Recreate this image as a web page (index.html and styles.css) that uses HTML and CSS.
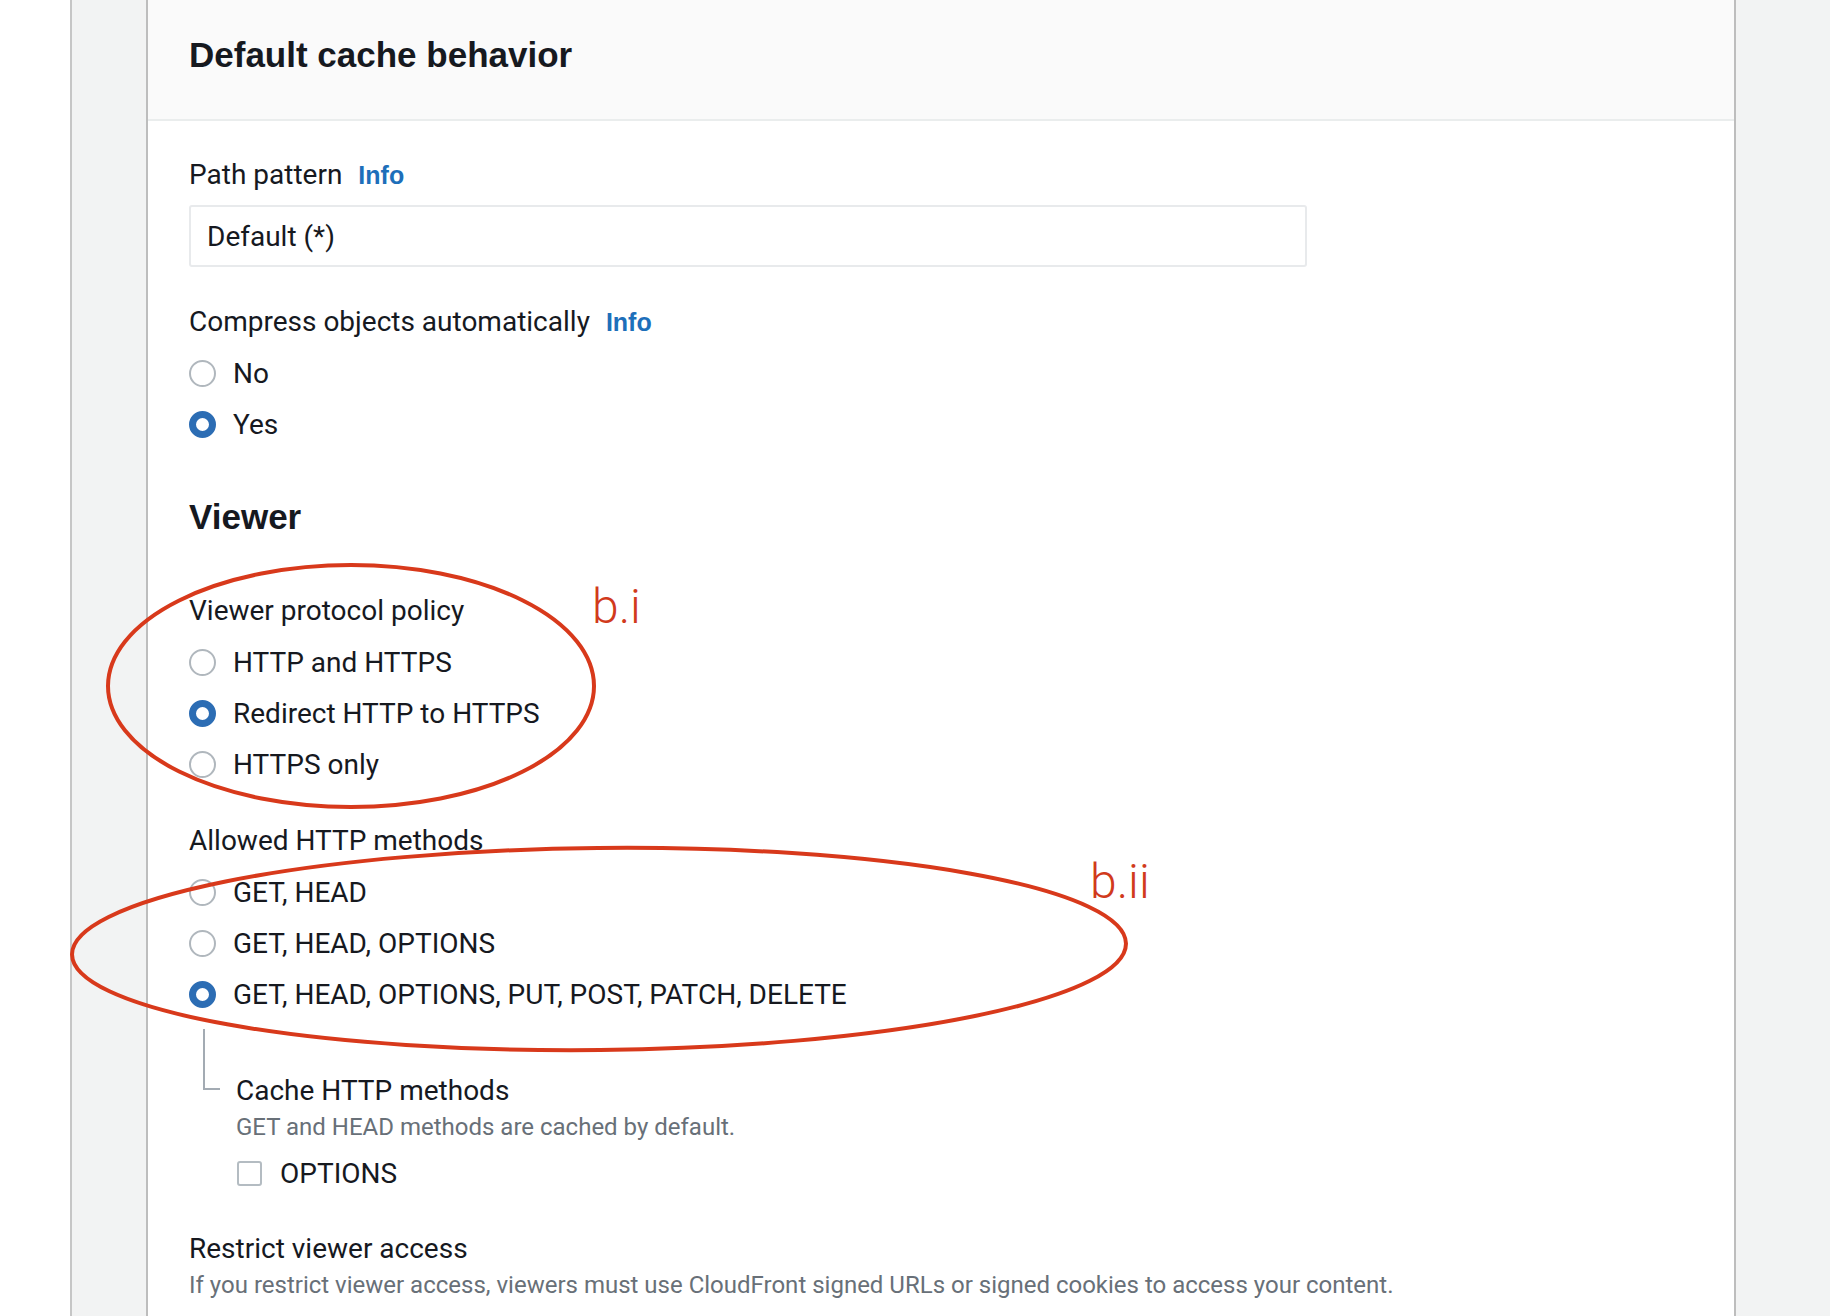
FILE: index.html
```html
<!DOCTYPE html>
<html lang="en">
<head>
<meta charset="utf-8">
<title>Default cache behavior</title>
<link rel="stylesheet" href="styles.css">
</head>
<body>
<div class="screen">
  <div class="gutter"></div>
  <div class="panel">
    <section class="card">
      <header class="card-header">
        <h2 class="card-title">Default cache behavior</h2>
      </header>
      <div class="card-body">
        <div class="label-row"><span class="label">Path pattern</span><span class="info">Info</span></div>
        <div class="text-input">Default (*)</div>

        <div class="label-row after-input"><span class="label">Compress objects automatically</span><span class="info">Info</span></div>
        <div class="radios">
          <div class="radio"><span class="radio-dot"></span><span>No</span></div>
          <div class="radio"><span class="radio-dot on"></span><span>Yes</span></div>
        </div>

        <h3 class="section-title">Viewer</h3>

        <div class="label-row after-heading"><span class="label">Viewer protocol policy</span></div>
        <div class="radios">
          <div class="radio"><span class="radio-dot"></span><span>HTTP and HTTPS</span></div>
          <div class="radio"><span class="radio-dot on"></span><span>Redirect HTTP to HTTPS</span></div>
          <div class="radio"><span class="radio-dot"></span><span>HTTPS only</span></div>
        </div>

        <div class="label-row after-radios"><span class="label">Allowed HTTP methods</span></div>
        <div class="radios">
          <div class="radio"><span class="radio-dot"></span><span>GET, HEAD</span></div>
          <div class="radio"><span class="radio-dot"></span><span>GET, HEAD, OPTIONS</span></div>
          <div class="radio"><span class="radio-dot on"></span><span>GET, HEAD, OPTIONS, PUT, POST, PATCH, DELETE</span></div>
        </div>

        <div class="nested">
          <div class="connector"></div>
          <div class="nested-content">
            <div class="label-row"><span class="label">Cache HTTP methods</span></div>
            <div class="desc">GET and HEAD methods are cached by default.</div>
            <div class="check"><span class="check-box"></span><span>OPTIONS</span></div>
          </div>
        </div>

        <div class="label-row after-check"><span class="label">Restrict viewer access</span></div>
        <div class="desc">If you restrict viewer access, viewers must use CloudFront signed URLs or signed cookies to access your content.</div>
      </div>
    </section>
  </div>

  <svg class="annotations" width="1830" height="1316" viewBox="0 0 1830 1316">
    <ellipse cx="351" cy="686" rx="243" ry="121" fill="none" stroke="#d8391b" stroke-width="4"/>
    <ellipse cx="599" cy="949" rx="527" ry="101" fill="none" stroke="#d8391b" stroke-width="4" transform="rotate(-0.6 599 949)"/>
    <text x="592" y="623" class="note">b.i</text>
    <text x="1090" y="898" class="note">b.ii</text>
  </svg>
</div>
</body>
</html>
```

FILE: styles.css
```css
* {
  box-sizing: border-box;
}

body {
  margin: 0;
  background: #ffffff;
  color: #16191f;
  font-family: Roboto, "Liberation Sans", Arial, sans-serif;
}

.screen {
  position: relative;
  display: flex;
  width: 1830px;
  height: 1316px;
  overflow: hidden;
}

.gutter {
  flex: none;
  width: 70px;
  background: #ffffff;
}

.panel {
  flex: 1;
  display: flex;
  background: #f2f3f3;
  border-left: 2px solid #c6c6c6;
  padding: 0 94px 0 74px;
}

.card {
  flex: 1;
  background: #ffffff;
  border-left: 2px solid #bdbdbd;
  border-right: 2px solid #bdbdbd;
}

.card-header {
  height: 121px;
  background: #fafafa;
  border-bottom: 2px solid #eaeded;
  padding: 33px 41px 0;
}

.card-title {
  margin: 0;
  font-family: "Liberation Sans", Arial, sans-serif;
  font-size: 35px;
  line-height: 44px;
  font-weight: 700;
}

.card-body {
  padding: 34px 41px 0;
}

.label-row {
  display: flex;
  align-items: baseline;
  gap: 16px;
  height: 40px;
  line-height: 40px;
  font-size: 28px;
}

.info {
  font-family: "Liberation Sans", Arial, sans-serif;
  font-size: 25px;
  font-weight: 700;
  color: #1d6fba;
}

.text-input {
  display: flex;
  align-items: center;
  width: 1118px;
  height: 62px;
  margin-top: 10px;
  padding-left: 16px;
  border: 2px solid #e8eaec;
  border-radius: 3px;
  font-size: 28px;
}

.after-input {
  margin-top: 35px;
}

.after-heading {
  margin-top: 52px;
}

.after-radios {
  margin-top: 31px;
}

.after-check {
  margin-top: 30px;
}

.radios {
  margin-top: 6px;
}

.radio {
  display: flex;
  align-items: center;
  gap: 17px;
  height: 51px;
  font-size: 28px;
}

.radio-dot {
  flex: none;
  width: 27px;
  height: 27px;
  border-radius: 50%;
  border: 2px solid #b0b7bd;
  background: #ffffff;
}

.radio-dot.on {
  border: 7.5px solid #2c6db4;
}

.section-title {
  margin: 45px 0 0;
  font-family: "Liberation Sans", Arial, sans-serif;
  font-size: 35px;
  line-height: 44px;
  font-weight: 700;
}

.nested {
  display: flex;
  margin-left: 14px;
}

.connector {
  flex: none;
  width: 17px;
  height: 61px;
  margin-top: 9px;
  border-left: 2px solid #a3abb3;
  border-bottom: 2px solid #a3abb3;
}

.nested-content {
  margin-left: 16px;
  padding-top: 51px;
}

.desc {
  font-size: 24px;
  line-height: 32px;
  color: #687078;
}

.check {
  display: flex;
  align-items: center;
  gap: 18px;
  height: 51px;
  margin-top: 5px;
  margin-left: 1px;
  font-size: 28px;
}

.check-box {
  flex: none;
  width: 25px;
  height: 25px;
  border: 2px solid #b4bcc2;
  border-radius: 3px;
}

.annotations {
  position: absolute;
  left: 0;
  top: 0;
  pointer-events: none;
}

.note {
  font-family: Roboto, "Liberation Sans", Arial, sans-serif;
  font-weight: 300;
  font-size: 48px;
  fill: #d13a1c;
}
```
